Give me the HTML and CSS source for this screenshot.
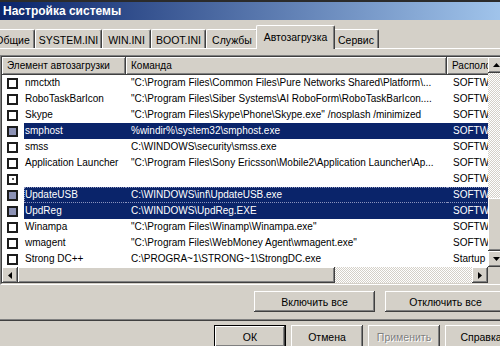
FILE: index.html
```html
<!DOCTYPE html>
<html lang="ru">
<head>
  <meta charset="UTF-8">
  <title>Настройка системы</title>
  <link rel="stylesheet" href="styles.css">
</head>
<body>
  <div class="window">
    <div class="titlebar">Настройка системы</div>

    <div class="tabs">
      <div class="tab tab-general">Общие</div>
      <div class="tab tab-system">SYSTEM.INI</div>
      <div class="tab tab-win">WIN.INI</div>
      <div class="tab tab-boot">BOOT.INI</div>
      <div class="tab tab-services">Службы</div>
      <div class="tab tab-startup active">Автозагрузка</div>
      <div class="tab tab-tools">Сервис</div>
    </div>

    <div class="panel">
      <div class="listview">
        <div class="lv-frame">
          <div class="lv-body">
            <div class="lv-grid">
              <div class="lv-head">
                <div class="cell c1">Элемент автозагрузки</div>
                <div class="cell c2">Команда</div>
                <div class="cell c3">Расположение</div>
              </div>

              <div class="lv-row">
                <div class="c1"><span class="check"></span><span class="label">nmctxth</span></div>
                <div class="c2">"C:\Program Files\Common Files\Pure Networks Shared\Platform\...</div>
                <div class="c3">SOFTWARE\Microsoft\Windows\CurrentVersion\Run</div>
              </div>
              <div class="lv-row">
                <div class="c1"><span class="check"></span><span class="label">RoboTaskBarIcon</span></div>
                <div class="c2">"C:\Program Files\Siber Systems\AI RoboForm\RoboTaskBarIcon....</div>
                <div class="c3">SOFTWARE\Microsoft\Windows\CurrentVersion\Run</div>
              </div>
              <div class="lv-row">
                <div class="c1"><span class="check"></span><span class="label">Skype</span></div>
                <div class="c2">"C:\Program Files\Skype\Phone\Skype.exe" /nosplash /minimized</div>
                <div class="c3">SOFTWARE\Microsoft\Windows\CurrentVersion\Run</div>
              </div>
              <div class="lv-row selected">
                <div class="c1"><span class="check"></span><span class="label">smphost</span></div>
                <div class="c2">%windir%\system32\smphost.exe</div>
                <div class="c3">SOFTWARE\Microsoft\Windows\CurrentVersion\Run</div>
              </div>
              <div class="lv-row">
                <div class="c1"><span class="check"></span><span class="label">smss</span></div>
                <div class="c2">C:\WINDOWS\security\smss.exe</div>
                <div class="c3">SOFTWARE\Microsoft\Windows\CurrentVersion\Run</div>
              </div>
              <div class="lv-row">
                <div class="c1"><span class="check"></span><span class="label">Application Launcher</span></div>
                <div class="c2">"C:\Program Files\Sony Ericsson\Mobile2\Application Launcher\Ap...</div>
                <div class="c3">SOFTWARE\Microsoft\Windows\CurrentVersion\Run</div>
              </div>
              <div class="lv-row">
                <div class="c1"><span class="check dot"></span><span class="label"></span></div>
                <div class="c2"></div>
                <div class="c3">SOFTWARE\Microsoft\Windows\CurrentVersion\Run</div>
              </div>
              <div class="lv-row selected focused">
                <div class="c1"><span class="check"></span><span class="label">UpdateUSB</span></div>
                <div class="c2">C:\WINDOWS\inf\UpdateUSB.exe</div>
                <div class="c3">SOFTWARE\Microsoft\Windows\CurrentVersion\Run</div>
              </div>
              <div class="lv-row selected">
                <div class="c1"><span class="check"></span><span class="label">UpdReg</span></div>
                <div class="c2">C:\WINDOWS\UpdReg.EXE</div>
                <div class="c3">SOFTWARE\Microsoft\Windows\CurrentVersion\Run</div>
              </div>
              <div class="lv-row">
                <div class="c1"><span class="check"></span><span class="label">Winampa</span></div>
                <div class="c2">"C:\Program Files\Winamp\Winampa.exe"</div>
                <div class="c3">SOFTWARE\Microsoft\Windows\CurrentVersion\Run</div>
              </div>
              <div class="lv-row">
                <div class="c1"><span class="check"></span><span class="label">wmagent</span></div>
                <div class="c2">"C:\Program Files\WebMoney Agent\wmagent.exe"</div>
                <div class="c3">SOFTWARE\Microsoft\Windows\CurrentVersion\Run</div>
              </div>
              <div class="lv-row">
                <div class="c1"><span class="check"></span><span class="label">Strong DC++</span></div>
                <div class="c2">C:\PROGRA~1\STRONG~1\StrongDC.exe</div>
                <div class="c3">Startup</div>
              </div>
            </div>

            <div class="vscroll">
              <div class="sb-btn">
                <svg width="7" height="4" viewBox="0 0 7 4"><path d="M3.5 0L7 4H0z"/></svg>
              </div>
              <div class="sb-track"></div>
              <div class="sb-thumb vthumb"></div>
              <div class="sb-btn">
                <svg width="7" height="4" viewBox="0 0 7 4"><path d="M0 0h7L3.5 4z"/></svg>
              </div>
            </div>
          </div>

          <div class="lv-bottom">
            <div class="hscroll">
              <div class="sb-btn">
                <svg width="4" height="7" viewBox="0 0 4 7"><path d="M0 3.5L4 0v7z"/></svg>
              </div>
              <div class="sb-thumb hthumb"></div>
              <div class="sb-track"></div>
              <div class="sb-btn">
                <svg width="4" height="7" viewBox="0 0 4 7"><path d="M0 0l4 3.5L0 7z"/></svg>
              </div>
            </div>
            <div class="corner"></div>
          </div>
        </div>
      </div>

      <div class="panel-actions">
        <button class="btn wide">Включить все</button>
        <button class="btn wide">Отключить все</button>
      </div>
    </div>

    <div class="dialog-actions">
      <button class="btn default">ОК</button>
      <button class="btn">Отмена</button>
      <button class="btn disabled">Применить</button>
      <button class="btn">Справка</button>
    </div>
  </div>
</body>
</html>
```

FILE: styles.css
```css
* {
  box-sizing: border-box;
  margin: 0;
  padding: 0;
}

body {
  width: 500px;
  height: 346px;
  overflow: hidden;
  background: #d4d0c8;
  font-family: 'Liberation Sans', Arial, sans-serif;
  font-size: 10px;
  color: #000;
}

.window {
  width: 520px;
}

/* title bar */

.titlebar {
  height: 20px;
  padding: 1px 0 0 3px;
  border-top: 2px solid #2b2b2b;
  background: linear-gradient(to right, #0a246a, #a6caf0);
  color: #fff;
  font-size: 12px;
  font-weight: bold;
  line-height: 17px;
}

/* tabs */

.tabs {
  display: flex;
  align-items: flex-end;
  height: 23px;
  margin-top: 5px;
  margin-left: -10px;
}

.tab {
  flex: none;
  height: 19px;
  line-height: 20px;
  font-size: 10.5px;
  text-align: center;
  border-top: 1px solid #fff;
  border-left: 1px solid #fff;
  border-right: 1px solid #404040;
  border-radius: 2px 2px 0 0;
  box-shadow: inset -1px 0 #808080;
  white-space: nowrap;
  overflow: hidden;
}

.tab-general { width: 45px; }
.tab-system { width: 67px; }
.tab-win { width: 49px; }
.tab-boot { width: 55px; }
.tab-services { width: 52px; }
.tab-startup { width: 79px; }
.tab-tools { width: 46px; }

.tab.active {
  position: relative;
  z-index: 1;
  height: 24px;
  margin: 0 -2px -1px;
  line-height: 22px;
  background: #d4d0c8;
}

/* tab page */

.panel {
  padding: 6px 14px 8px 0;
  border-top: 1px solid #fff;
  border-bottom: 1px solid #404040;
  box-shadow: inset 0 -1px #808080;
}

.listview {
  border: 1px solid;
  border-color: #808080 #fff #fff #808080;
}

.lv-frame {
  border: 1px solid;
  border-color: #404040 #d4d0c8 #d4d0c8 #404040;
  background: #fff;
}

.lv-body {
  display: flex;
}

.lv-grid {
  flex: 1;
  overflow: hidden;
}

.lv-head,
.lv-row {
  display: flex;
  white-space: nowrap;
}

.lv-head {
  height: 18px;
  background: #d4d0c8;
}

.lv-head .cell {
  padding-left: 5px;
  line-height: 18px;
  box-shadow: inset -1px -1px #404040, inset 1px 1px #fff, inset -2px -2px #808080;
}

.c1 {
  flex: none;
  width: 124px;
}

.c2 {
  flex: none;
  width: 321px;
  overflow: hidden;
}

.c3 {
  flex: none;
  width: 200px;
}

.lv-row {
  height: 16px;
  line-height: 16px;
}

.lv-row .c1 {
  display: flex;
  align-items: center;
  padding-left: 5px;
}

.lv-row .c2 {
  padding-left: 5px;
}

.lv-row .c3 {
  padding-left: 6px;
}

.check {
  flex: none;
  display: flex;
  align-items: center;
  justify-content: center;
  width: 11px;
  height: 11px;
  margin-right: 6px;
  border: 2px solid #1c1c1c;
  background: #fff;
}

.check.dot::after {
  content: "";
  width: 2px;
  height: 2px;
  background: #555;
}

.label {
  flex: 1;
  align-self: stretch;
  padding-left: 1px;
}

.lv-row.selected .label,
.lv-row.selected .c2,
.lv-row.selected .c3 {
  background: #0a246a;
  color: #fff;
}

.lv-row.selected .check {
  background: #8c92b5;
}

.lv-row.focused .label,
.lv-row.focused .c2,
.lv-row.focused .c3 {
  border-top: 1px dotted #8a93bd;
  border-bottom: 1px dotted #8a93bd;
  line-height: 14px;
}

.lv-row.focused .label {
  border-left: 1px dotted #8a93bd;
  padding-left: 0;
}

/* scrollbars */

.vscroll {
  display: flex;
  flex-direction: column;
  width: 16px;
}

.sb-btn,
.sb-thumb,
.corner {
  flex: none;
  background: #d4d0c8;
}

.sb-btn,
.sb-thumb {
  box-shadow: inset -1px -1px #404040, inset 1px 1px #fff, inset -2px -2px #808080;
}

.sb-btn {
  display: flex;
  align-items: center;
  justify-content: center;
  width: 16px;
  height: 16px;
}

.sb-track {
  flex: 1;
  background: repeating-conic-gradient(#fff 0 25%, #d4d0c8 0 50%) 0 0 / 2px 2px;
}

.vthumb {
  height: 53px;
}

.lv-bottom {
  display: flex;
  height: 16px;
}

.hscroll {
  flex: 1;
  display: flex;
}

.hthumb {
  width: 317px;
}

.corner {
  width: 16px;
}

/* buttons */

.btn {
  height: 21px;
  border: 0;
  background: #d4d0c8;
  font-family: inherit;
  font-size: 10.5px;
  color: #000;
  box-shadow: inset -1px -1px #404040, inset 1px 1px #fff, inset -2px -2px #808080;
}

.panel-actions {
  display: flex;
  justify-content: flex-end;
  gap: 10px;
  margin-top: 6px;
}

.btn.wide {
  width: 121px;
}

.dialog-actions {
  display: flex;
  justify-content: flex-end;
  gap: 5px;
  margin-top: 4px;
  padding-right: 3px;
}

.dialog-actions .btn {
  width: 72px;
  height: 23px;
}

.btn.default {
  border: 1px solid #000;
}

.btn.disabled {
  color: #808080;
  text-shadow: 1px 1px #fff;
}
```
